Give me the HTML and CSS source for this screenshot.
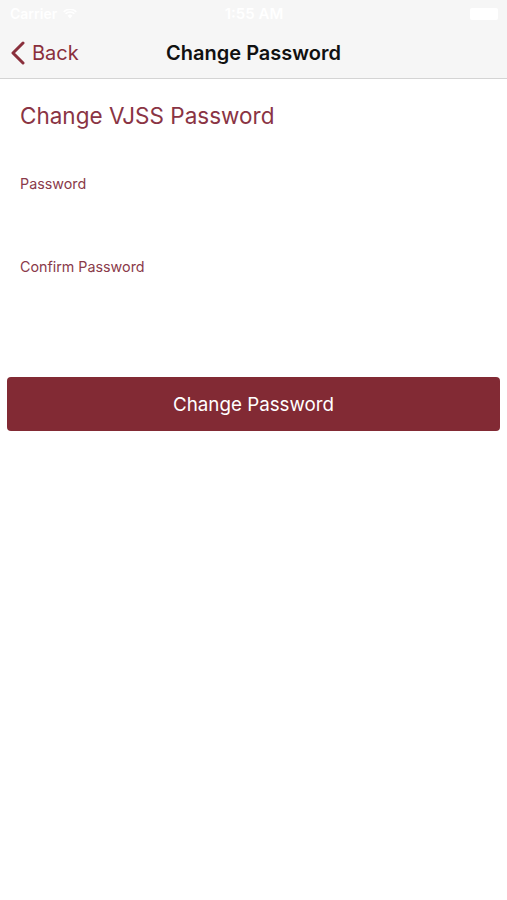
FILE: index.html
```html
<!DOCTYPE html>
<html>
<head>
    <meta charset="UTF-8">
    <meta name="viewport" content="width=device-width, initial-scale=1.0">
    <title>Change Password</title>
    <link rel="stylesheet" href="styles.css">
</head>
<body>
    <header class="top">
        <div class="status-bar">
            <span class="carrier">Carrier
                <svg class="wifi" width="14" height="10" viewBox="0 0 14 10">
                    <path d="M7 9.5 L4.6 6.8 A3.4 3.4 0 0 1 9.4 6.8 Z" fill="#fff"/>
                    <path d="M2.6 4.8 A6.2 6.2 0 0 1 11.4 4.8" stroke="#fff" stroke-width="1.6" fill="none"/>
                    <path d="M0.7 2.9 A8.8 8.8 0 0 1 13.3 2.9" stroke="#fff" stroke-width="1.6" fill="none"/>
                </svg>
            </span>
            <span class="time">1:55 AM</span>
            <span class="battery"><span class="battery-fill"></span></span>
        </div>
        <nav class="nav-bar">
            <a class="back" href="#">
                <svg width="16" height="24" viewBox="0 0 16 24">
                    <path d="M13 2 L3 12 L13 22" stroke="#8a2f3c" stroke-width="3" fill="none" stroke-linecap="round" stroke-linejoin="round"/>
                </svg>
                <span>Back</span>
            </a>
            <h1 class="nav-title">Change Password</h1>
        </nav>
    </header>

    <main class="content">
        <h2 class="page-title">Change VJSS Password</h2>
        <form class="pw-form">
            <label class="field">
                <span class="field-label">Password</span>
                <input type="password" name="password">
            </label>
            <label class="field">
                <span class="field-label">Confirm Password</span>
                <input type="password" name="confirm">
            </label>
            <button type="submit" class="submit">Change Password</button>
        </form>
    </main>
</body>
</html>
```
FILE: styles.css
```css
* {
    margin: 0;
    padding: 0;
    box-sizing: border-box;
}

body {
    font-family: Inter, "Open Sans", sans-serif;
    background-color: #fff;
    width: 507px;
    height: 900px;
    overflow: hidden;
}

.top {
    background-color: #f6f6f6;
    border-bottom: 1px solid #d4d4d4;
}

.status-bar {
    height: 27px;
    display: flex;
    align-items: center;
    justify-content: space-between;
    padding: 0 9px 0 10px;
    color: #fff;
    font-size: 14px;
    font-weight: 600;
}

.carrier {
    display: flex;
    align-items: center;
    gap: 6px;
    width: 90px;
}

.time {
    font-size: 15px;
}

.battery {
    width: 90px;
    display: flex;
    justify-content: flex-end;
}

.battery-fill {
    width: 28px;
    height: 12px;
    background: #fff;
    border-radius: 2px;
}

.nav-bar {
    height: 51px;
    position: relative;
    display: flex;
    align-items: center;
    padding-left: 10px;
}

.back {
    display: flex;
    align-items: center;
    gap: 6px;
    color: #8a2f3c;
    text-decoration: none;
    font-size: 20px;
    position: relative;
    z-index: 1;
}

.nav-title {
    position: absolute;
    left: 0;
    right: 0;
    text-align: center;
    font-size: 20px;
    font-weight: 600;
    color: #111;
}

.content {
    padding: 23px 7px 0 7px;
}

.page-title {
    font-size: 22.5px;
    font-weight: 400;
    color: #8a3444;
    padding-left: 13px;
    margin-bottom: 46px;
}

.pw-form {
    display: flex;
    flex-direction: column;
}

.field {
    display: flex;
    flex-direction: column;
    padding-left: 13px;
    height: 83px;
}

.field-label {
    font-size: 14.3px;
    color: #8a3a4a;
}

.field input {
    border: none;
    outline: none;
    background: transparent;
    font-size: 16px;
    height: 30px;
}

.submit {
    margin-top: 36px;
    height: 54px;
    border: none;
    border-radius: 4px;
    background-color: #822a34;
    color: #fff;
    font-family: inherit;
    font-size: 18.8px;
    cursor: pointer;
}
```
